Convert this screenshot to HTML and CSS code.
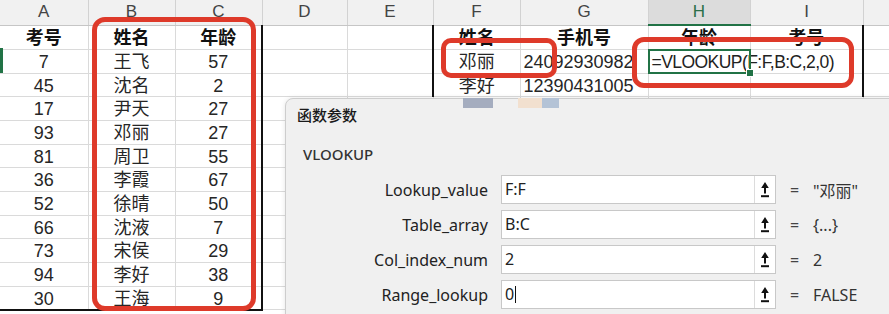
FILE: index.html
```html
<!DOCTYPE html>
<html lang="zh">
<head>
<meta charset="utf-8">
<title>VLOOKUP</title>
<link rel="stylesheet" href="styles.css">
</head>
<body>
<div class="sheet">
  <table class="grid">
    <colgroup>
      <col class="w88"><col class="w87"><col class="w87"><col class="w85"><col class="w86"><col class="w87"><col class="w128"><col class="w102"><col class="w113"><col class="w26">
    </colgroup>
    <tr class="hdr">
      <th>A</th><th>B</th><th>C</th><th>D</th><th>E</th><th>F</th><th>G</th><th class="hsel">H</th><th>I</th><th></th>
    </tr>
    <tr class="r24">
      <td class="b">考号</td><td class="b">姓名</td><td class="b rb">年龄</td><td></td><td class="rb"></td><td class="b">姓名</td><td class="b">手机号</td><td class="b">年龄</td><td class="b rb">考号</td><td></td>
    </tr>
    <tr class="r24">
      <td>7</td><td>王飞</td><td class="rb">57</td><td></td><td class="rb"></td><td>邓丽</td><td class="t">24092930982</td><td class="t sel">=VLOOKUP(F:F,B:C,2,0)</td><td class="rb"></td><td></td>
    </tr>
    <tr class="r23">
      <td>45</td><td>沈名</td><td class="rb">2</td><td></td><td class="rb"></td><td>李好</td><td class="t">12390431005</td><td></td><td class="rb"></td><td></td>
    </tr>
    <tr class="r24"><td>17</td><td>尹天</td><td class="rb">27</td><td></td><td></td><td></td><td></td><td></td><td></td><td></td></tr>
    <tr class="r24"><td>93</td><td>邓丽</td><td class="rb">27</td><td></td><td></td><td></td><td></td><td></td><td></td><td></td></tr>
    <tr class="r23"><td>81</td><td>周卫</td><td class="rb">55</td><td></td><td></td><td></td><td></td><td></td><td></td><td></td></tr>
    <tr class="r24"><td>36</td><td>李霞</td><td class="rb">67</td><td></td><td></td><td></td><td></td><td></td><td></td><td></td></tr>
    <tr class="r24"><td>52</td><td>徐晴</td><td class="rb">50</td><td></td><td></td><td></td><td></td><td></td><td></td><td></td></tr>
    <tr class="r23"><td>66</td><td>沈液</td><td class="rb">7</td><td></td><td></td><td></td><td></td><td></td><td></td><td></td></tr>
    <tr class="r24"><td>73</td><td>宋侯</td><td class="rb">29</td><td></td><td></td><td></td><td></td><td></td><td></td><td></td></tr>
    <tr class="r24"><td>94</td><td>李好</td><td class="rb">38</td><td></td><td></td><td></td><td></td><td></td><td></td><td></td></tr>
    <tr class="r23"><td class="bb">30</td><td class="bb">王海</td><td class="rb bb">9</td><td></td><td></td><td></td><td></td><td></td><td></td><td></td></tr>
  </table>

  <span class="rowmark"></span>

  <div class="dialog">
    <span class="ghost g1"></span><span class="ghost g2"></span><span class="ghost g3"></span>
    <div class="dtitle">函数参数</div>
    <div class="fname">VLOOKUP</div>
    <div class="args">
      <div class="lbl">Lookup_value</div>
      <div class="inp"><span class="v">F:F</span><span class="btn"><svg width="10" height="17" viewBox="0 0 10 17"><path d="M5 1 L1.2 7 H4 V12.5 H6 V7 H8.8 Z" fill="#111"/><rect x="1" y="14.2" width="8" height="2" fill="#111"/></svg></span></div>
      <div class="eq">=</div>
      <div class="val">"邓丽"</div>

      <div class="lbl">Table_array</div>
      <div class="inp"><span class="v">B:C</span><span class="btn"><svg width="10" height="17" viewBox="0 0 10 17"><path d="M5 1 L1.2 7 H4 V12.5 H6 V7 H8.8 Z" fill="#111"/><rect x="1" y="14.2" width="8" height="2" fill="#111"/></svg></span></div>
      <div class="eq">=</div>
      <div class="val">{...}</div>

      <div class="lbl">Col_index_num</div>
      <div class="inp"><span class="v">2</span><span class="btn"><svg width="10" height="17" viewBox="0 0 10 17"><path d="M5 1 L1.2 7 H4 V12.5 H6 V7 H8.8 Z" fill="#111"/><rect x="1" y="14.2" width="8" height="2" fill="#111"/></svg></span></div>
      <div class="eq">=</div>
      <div class="val">2</div>

      <div class="lbl">Range_lookup</div>
      <div class="inp"><span class="v">0<span class="caret"></span></span><span class="btn"><svg width="10" height="17" viewBox="0 0 10 17"><path d="M5 1 L1.2 7 H4 V12.5 H6 V7 H8.8 Z" fill="#111"/><rect x="1" y="14.2" width="8" height="2" fill="#111"/></svg></span></div>
      <div class="eq">=</div>
      <div class="val">FALSE</div>
    </div>
  </div>

  <div class="ann ann1"></div>
  <div class="ann ann2"></div>
  <div class="ann ann3"></div>
</div>
</body>
</html>
```

FILE: styles.css
```css
* { box-sizing: border-box; }
html, body { margin: 0; padding: 0; background: #fff; }

.sheet {
  position: relative;
  width: 889px;
  height: 314px;
  overflow: hidden;
  font-family: "Liberation Sans", "Noto Sans CJK SC", sans-serif;
}

.grid {
  border-collapse: collapse;
  table-layout: fixed;
  width: 889px;
}
.w88 { width: 88px; }
.w87 { width: 87px; }
.w85 { width: 85px; }
.w86 { width: 86px; }
.w128 { width: 128px; }
.w102 { width: 102px; }
.w113 { width: 113px; }
.w26 { width: 26px; }

.grid th,
.grid td {
  border: 1px solid #dadada;
  padding: 0 3px;
  white-space: nowrap;
  overflow: hidden;
  text-align: center;
  vertical-align: middle;
}
.grid tr > :first-child { border-left: none; }

.hdr { height: 25px; }
.r24 { height: 24px; }
.r23 { height: 23px; }

.grid th {
  border-top: none;
  background: #f1f1f1;
  border-color: #d2d2d2;
  border-bottom: 1px solid #c6c6c6;
  font-weight: normal;
  font-size: 17px;
  color: #444;
  line-height: 20px;
}
.grid th.hsel {
  background: #dcdcdc;
  color: #2b6f49;
  border-bottom: 2px solid #217346;
}

.grid td {
  font-size: 18px;
  line-height: 20px;
  color: #262626;
  padding-top: 2px;
}
.grid td.b { font-weight: bold; color: #111; }
.grid td.t { text-align: left; }
.grid td.rb { border-right: 2px solid #111; }
.grid td.bb { border-bottom: 2px solid #111; }

.grid td.sel {
  position: relative;
  overflow: visible;
  font-size: 17.5px;
  letter-spacing: -0.55px;
  color: #222;
}
.grid td.sel::after {
  content: "";
  position: absolute;
  left: -1px; top: -1px; right: -1px; bottom: -1px;
  border: 2px solid #217346;
}
.grid td.sel::before {
  content: "";
  position: absolute;
  right: -4px; bottom: -4px;
  width: 6px; height: 6px;
  background: #217346;
  border: 1px solid #fff;
  z-index: 1;
}

.rowmark {
  position: absolute;
  left: 0; top: 48px;
  width: 3px; height: 25px;
  background: #217346;
}

/* dialog */
.dialog {
  position: absolute;
  left: 285px;
  top: 98px;
  width: 640px;
  height: 260px;
  background: #f0f0f0;
  border: 1px solid #cdcdcd;
  border-radius: 8px;
  box-shadow: 0 0 5px rgba(0,0,0,0.10);
  padding: 6px 0 0 11px;
  font-family: "Noto Sans", "Noto Sans CJK SC", sans-serif;
  color: #222;
}
.ghost { position: absolute; top: -1px; height: 10px; }
.g1 { left: 177px; width: 30px; background: #a5adbf; }
.g2 { left: 232px; width: 24px; background: #f2e0cf; }
.g3 { left: 256px; width: 17px; background: #b4c3d6; }

.dtitle {
  font-family: "Noto Sans CJK SC", sans-serif;
  font-size: 15px;
  font-weight: 500;
  line-height: 20px;
  color: #1a1a1a;
}
.fname {
  margin: 19px 0 0 6px;
  font-size: 15px;
  font-weight: 500;
  line-height: 20px;
  color: #333;
}
.args {
  display: grid;
  grid-template-columns: 204px 275px 37px auto;
  grid-auto-rows: 29px;
  row-gap: 6px;
  margin-top: 11px;
}
.lbl {
  align-self: center;
  text-align: right;
  padding-right: 13px;
  font-size: 16px;
  line-height: 20px;
  color: #222;
}
.inp {
  display: flex;
  background: #fff;
  border: 1px solid #c8c8c8;
}
.inp .v {
  flex: 1;
  padding-left: 3px;
  font-size: 16px;
  line-height: 27px;
  color: #222;
}
.caret {
  display: inline-block;
  width: 1px;
  height: 17px;
  background: #111;
  vertical-align: -3px;
  margin-left: 1px;
}
.inp .btn {
  width: 21px;
  border-left: 1px solid #dcdcdc;
  display: flex;
  align-items: center;
  justify-content: center;
}
.eq {
  align-self: center;
  text-align: center;
  font-size: 16px;
  color: #444;
}
.val {
  align-self: center;
  font-size: 16px;
  color: #333;
}

/* red annotation boxes */
.ann {
  position: absolute;
  border: 5px solid #de3a2a;
  border-radius: 13px;
}
.ann1 { left: 92px; top: 17px; width: 164px; height: 294px; }
.ann2 { left: 441px; top: 38px; width: 116px; height: 40px; border-radius: 10px; }
.ann3 { left: 632px; top: 37px; width: 222px; height: 51px; border-radius: 12px; }
```
